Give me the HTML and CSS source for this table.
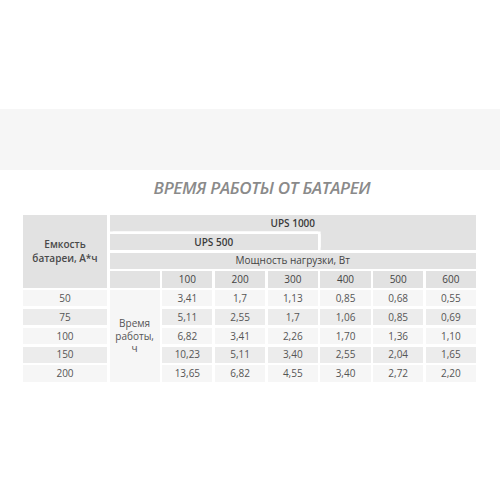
FILE: index.html
```html
<!DOCTYPE html>
<html lang="ru">
<head>
<meta charset="utf-8">
<title>Время работы от батареи</title>
<link rel="stylesheet" href="styles.css">
</head>
<body>
<div class="page">
  <div class="band"></div>
  <h1 class="title">ВРЕМЯ РАБОТЫ ОТ БАТАРЕИ</h1>
  <div class="table">
    <div class="cell head label">Емкость<br>батареи, А*ч</div>
    <div class="cell head ups1000">UPS 1000</div>
    <div class="cell head ups500">UPS 500</div>
    <div class="cell head power">Мощность нагрузки, Вт</div>
    <div class="cell head blank"></div>
    <div class="cell head">100</div>
    <div class="cell head">200</div>
    <div class="cell head">300</div>
    <div class="cell head">400</div>
    <div class="cell head">500</div>
    <div class="cell head">600</div>

    <div class="cell light cap">50</div>
    <div class="cell light time">Время<br>работы,<br>ч</div>
    <div class="cell light">3,41</div><div class="cell light">1,7</div><div class="cell light">1,13</div><div class="cell light">0,85</div><div class="cell light">0,68</div><div class="cell light">0,55</div>

    <div class="cell dark cap">75</div>
    <div class="cell dark">5,11</div><div class="cell dark">2,55</div><div class="cell dark">1,7</div><div class="cell dark">1,06</div><div class="cell dark">0,85</div><div class="cell dark">0,69</div>

    <div class="cell light cap">100</div>
    <div class="cell light">6,82</div><div class="cell light">3,41</div><div class="cell light">2,26</div><div class="cell light">1,70</div><div class="cell light">1,36</div><div class="cell light">1,10</div>

    <div class="cell dark cap">150</div>
    <div class="cell dark">10,23</div><div class="cell dark">5,11</div><div class="cell dark">3,40</div><div class="cell dark">2,55</div><div class="cell dark">2,04</div><div class="cell dark">1,65</div>

    <div class="cell light cap">200</div>
    <div class="cell light">13,65</div><div class="cell light">6,82</div><div class="cell light">4,55</div><div class="cell light">3,40</div><div class="cell light">2,72</div><div class="cell light">2,20</div>
  </div>
</div>
</body>
</html>
```
FILE: styles.css
```css
html, body {
  margin: 0;
  padding: 0;
  background: #ffffff;
}

.page {
  width: 500px;
  padding-top: 109px;
  font-family: "Open Sans", "Liberation Sans", sans-serif;
}

.band {
  height: 61px;
  background: #f6f6f6;
}

.title {
  margin: 8px 0 0 0;
  padding-left: 24px;
  height: 37px;
  text-align: center;
  font-size: 17px;
  line-height: 20px;
  font-style: italic;
  font-weight: 600;
  color: #8a8a8a;
  letter-spacing: -0.3px;
}

.table {
  margin-left: 23px;
  width: 453px;
  display: grid;
  grid-template-columns: 84px repeat(7, 1fr);
  grid-template-rows: repeat(9, 16.3px);
  column-gap: 2.6px;
  row-gap: 2.5px;
  font-size: 10px;
  color: #555555;
}

.cell {
  display: flex;
  align-items: center;
  justify-content: center;
  text-align: center;
  line-height: 12.5px;
  white-space: nowrap;
}

.head {
  background: #e2e2e2;
  color: #444444;
}

.light {
  background: #f6f6f6;
}

.dark {
  background: #ececec;
}

.label {
  grid-column: 1;
  grid-row: 1 / 5;
  font-weight: 600;
  line-height: 14px;
  color: #4a4a4a;
}

.ups1000 {
  grid-column: 2 / 9;
  grid-row: 1 / 3;
  align-items: flex-start;
  padding-top: 2px;
  font-weight: 600;
  color: #3a3a3a;
}

.ups500 {
  grid-column: 2 / 6;
  grid-row: 2;
  font-weight: 600;
  color: #3a3a3a;
  box-shadow: 0 -2.5px 0 #ffffff, 2.6px -2.5px 0 #ffffff, 2.6px 0 0 #ffffff;
}

.power {
  grid-column: 2 / 9;
  grid-row: 3;
}

.blank {
  grid-column: 2;
  grid-row: 4;
}

.cap {
  grid-column: 1;
}

.time {
  grid-column: 2;
  grid-row: 5 / 10;
  background: #f6f6f6;
}
```
